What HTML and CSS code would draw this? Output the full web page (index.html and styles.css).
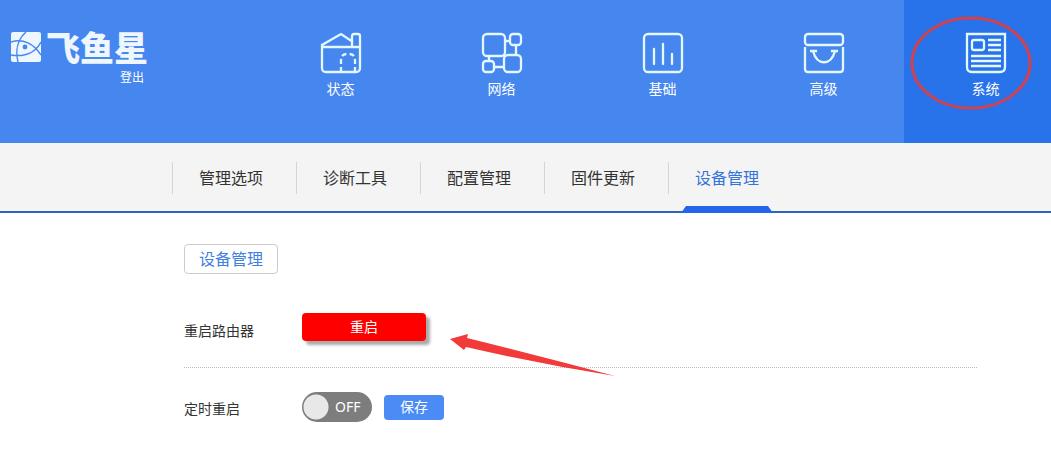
FILE: index.html
```html
<!DOCTYPE html>
<html lang="zh-CN">
<head>
<meta charset="utf-8">
<title>设备管理</title>
<link rel="stylesheet" href="styles.css">
</head>
<body>
<header class="header">
  <div class="brand">
    <div class="logo">
      <svg class="logo-mark" viewBox="0 0 30 30" aria-hidden="true">
        <rect width="30" height="30" rx="2" fill="#eef6ff"/>
        <g fill="none" stroke="#4686ef" stroke-width="1.4">
          <path d="M15 0C7 7 4 18 7 30"/>
          <path d="M0 10C12 6 23 12 30 23"/>
          <path d="M30 10C24 21 13 25 0 23"/>
        </g>
        <circle cx="14" cy="15" r="2.4" fill="#4686ef"/>
      </svg>
      <span class="logo-name">飞鱼星</span>
    </div>
    <a class="logout" href="#">登出</a>
  </div>
  <nav class="nav">
    <a class="nav-item" href="#">
      <svg class="nav-icon" viewBox="0 0 42 42" aria-hidden="true">
        <path d="M2 15h38v21q0 4-4 4H6q-4 0-4-4zM2 15v-2L21 2l12 8M32 15V4q0-2 2-2h4q2 0 2 2v11"/>
        <path stroke-dasharray="5 3" d="M21 40V28q0-6 6-6h2q6 0 6 6v12"/>
      </svg>
      <span>状态</span>
    </a>
    <a class="nav-item" href="#">
      <svg class="nav-icon" viewBox="0 0 42 42" aria-hidden="true">
        <rect x="2" y="2" width="22" height="22" rx="4"/>
        <rect x="29" y="2" width="11" height="11" rx="3"/>
        <rect x="2" y="29" width="11" height="11" rx="3"/>
        <rect x="23" y="23" width="17" height="17" rx="4" fill="#4686ef"/>
        <path d="M24 9h5M35 13v10M8 24v5M13 35h10"/>
      </svg>
      <span>网络</span>
    </a>
    <a class="nav-item" href="#">
      <svg class="nav-icon" viewBox="0 0 42 42" aria-hidden="true">
        <rect x="2" y="2" width="38" height="38" rx="4"/>
        <path stroke-linecap="round" d="M12 17v15M21 12v20M30 22v10"/>
      </svg>
      <span>基础</span>
    </a>
    <a class="nav-item" href="#">
      <svg class="nav-icon" viewBox="0 0 42 42" aria-hidden="true">
        <rect x="2" y="2" width="38" height="11" rx="3"/>
        <path d="M2 15v22q0 3 3 3h32q3 0 3-3V15M7 19h7M28 19h7M10 19c4 15 18 15 22 0"/>
      </svg>
      <span>高级</span>
    </a>
    <a class="nav-item nav-item-active" href="#">
      <svg class="nav-icon" viewBox="0 0 42 42" aria-hidden="true">
        <path d="M2 2h38v33q0 5-5 5H7q-5 0-5-5z"/>
        <rect x="7" y="8" width="12" height="10" rx="2"/>
        <path d="M23 8h13M23 13h13M23 18h13M6 24h30M6 29h30M6 34h30"/>
      </svg>
      <span>系统</span>
      <svg class="mark-ring" viewBox="0 0 122 94" aria-hidden="true">
        <ellipse cx="61" cy="47" rx="59" ry="45"/>
      </svg>
    </a>
  </nav>
</header>
<nav class="tabs">
  <a class="tab" href="#">管理选项</a>
  <a class="tab" href="#">诊断工具</a>
  <a class="tab" href="#">配置管理</a>
  <a class="tab" href="#">固件更新</a>
  <a class="tab tab-active" href="#">设备管理</a>
</nav>
<main class="content">
  <h1 class="section-title">设备管理</h1>
  <div class="row row-restart">
    <span class="row-label" id="restart-label">重启路由器</span>
    <button class="restart" type="button" aria-describedby="restart-label">重启</button>
    <svg class="mark-arrow" viewBox="0 0 166 46" aria-hidden="true">
      <path d="M0 8L18 3L17 7Q90 25 165 45Q90 33 16 16L14 19Z"/>
    </svg>
  </div>
  <div class="row row-schedule">
    <label class="row-label" for="schedule">定时重启</label>
    <label class="switch">
      <input class="switch-input" id="schedule" type="checkbox">
      <span class="switch-text">OFF</span>
    </label>
    <button class="save" type="button">保存</button>
  </div>
</main>
</body>
</html>
```
FILE: styles.css
```css
* {
  box-sizing: border-box;
}

body {
  margin: 0;
  background: #fff;
  color: #333;
  font-family: "Noto Sans", "Noto Sans CJK SC", sans-serif;
  font-size: 14px;
  line-height: 20px;
}

a {
  color: inherit;
  text-decoration: none;
}

button {
  border: 0;
  color: #fff;
  font: inherit;
  cursor: pointer;
}

.header {
  display: flex;
  overflow: hidden;
  background: #4686ef;
  color: #fff;
}

.brand {
  display: flex;
  flex: none;
  flex-direction: column;
  align-items: flex-start;
  width: 260px;
  padding: 30px 0 0 11px;
}

.logo {
  display: flex;
  align-items: center;
  gap: 5px;
}

.logo-mark {
  width: 30px;
  height: 30px;
}

.logo-name {
  color: #eef6ff;
  font-family: "Noto Sans CJK SC", sans-serif;
  font-size: 34px;
  font-weight: 900;
  line-height: 34px;
}

.logout {
  margin: 4px 0 0 109px;
  font-size: 12px;
}

.nav {
  display: flex;
  flex: none;
}

.nav-item {
  position: relative;
  display: flex;
  flex-direction: column;
  align-items: center;
  gap: 5px;
  width: 161px;
  padding: 32px 0 44px;
}

.nav-item-active {
  width: 163px;
  background: #2872ea;
}

.nav-icon {
  width: 42px;
  height: 42px;
  fill: none;
  stroke: #e4f8ff;
  stroke-width: 2.3;
}

.mark-ring {
  position: absolute;
  top: 16px;
  left: 6px;
  width: 122px;
  height: 94px;
  fill: none;
  stroke: #d0424f;
  stroke-width: 3;
}

.tabs {
  display: flex;
  padding: 19px 0 0 172px;
  border-bottom: 2px solid #2b66b8;
  background: #f4f4f4;
}

.tab {
  position: relative;
  width: 124px;
  height: 49px;
  padding: 0 0 0 27px;
  background: linear-gradient(#d4d4d4, #d4d4d4) left top / 1px 32px no-repeat;
  font-size: 16px;
  line-height: 32px;
}

.tab-active {
  color: #3573dc;
}

.tab-active::after {
  position: absolute;
  bottom: -2px;
  left: 13px;
  width: 92px;
  height: 7px;
  background: #2563eb;
  clip-path: polygon(5px 0, 87px 0, 100% 100%, 0 100%);
  content: "";
}

.content {
  margin: 31px 74px 0 184px;
}

.section-title {
  width: fit-content;
  margin: 0;
  padding: 0 14px;
  border: 1px solid #ccc;
  border-radius: 4px;
  color: #4280e0;
  font-size: 16px;
  font-weight: 400;
  line-height: 28px;
}

.row {
  position: relative;
  display: flex;
}

.row-restart {
  align-items: flex-start;
  padding: 39px 0 26px;
  border-bottom: 1px dotted #bbb;
}

.row-restart .row-label {
  padding-top: 8px;
}

.row-schedule {
  align-items: center;
  padding-top: 24px;
}

.row-schedule .row-label {
  padding-top: 4px;
}

.row-label {
  width: 118px;
}

.restart {
  width: 124px;
  height: 28px;
  border-radius: 4px;
  background: #f00;
  box-shadow: 4px 4px 3px #aaa;
}

.mark-arrow {
  position: absolute;
  top: 57px;
  left: 266px;
  width: 166px;
  height: 46px;
  fill: #f23a3a;
}

.switch {
  position: relative;
  display: block;
  height: 30px;
}

.switch-input {
  display: block;
  width: 70px;
  height: 30px;
  margin: 0;
  border-radius: 15px;
  background: radial-gradient(circle at 14px 15px, #e8e8e8 12px, #7d7d7d 13px);
  appearance: none;
  cursor: pointer;
}

.switch-text {
  position: absolute;
  top: 5px;
  left: 33px;
  color: #fff;
  font-size: 14px;
}

.save {
  width: 60px;
  height: 25px;
  margin-left: 12px;
  border-radius: 4px;
  background: #4a8bf5;
}
```
